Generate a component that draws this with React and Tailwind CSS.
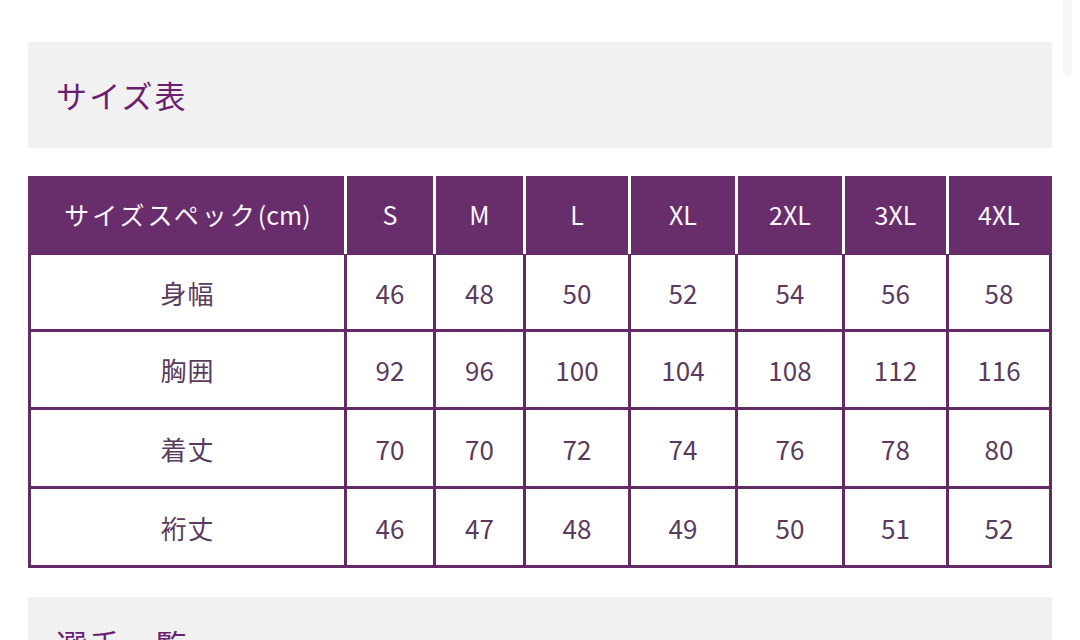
import React from "react";

const cols = ["S", "M", "L", "XL", "2XL", "3XL", "4XL"];
const rows = [
  ["身幅", [46, 48, 50, 52, 54, 56, 58]],
  ["胸囲", [92, 96, 100, 104, 108, 112, 116]],
  ["着丈", [70, 70, 72, 74, 76, 78, 80]],
  ["裄丈", [46, 47, 48, 49, 50, 51, 52]],
];
const gridCols = "grid grid-cols-[316px_89px_90px_105px_107px_107px_104px_106px]";
const font = { fontFamily: '"Noto Sans CJK JP", "Noto Sans", sans-serif' };

export default function App() {
  return (
    <div className="relative w-[1080px] h-[640px] overflow-hidden bg-white" style={font}>
      <div className="absolute right-[8px] top-0 w-[9px] h-[76px] rounded-b-full bg-[#f7f7f7]" />
      <div className="flex flex-col pt-[42px] px-[28px] w-[1080px]">
        <div className="h-[106px] bg-[#f1f1f1] flex items-center pl-[28px] pb-[2px]">
          <h2 className="text-[31px] leading-none text-[#6c1f71] tracking-[0.07em]">サイズ表</h2>
        </div>

        <div className="mt-[28px] w-[1024px]">
          <div className={`${gridCols} h-[78px] bg-[#682d6b]`}>
            <div className="flex items-center justify-center border-l-[3px] border-[#682d6b] text-[#fbf6fb] text-[25px]">
              <span className="tracking-[0.12em]">サイズスペック</span>
              <span>(cm)</span>
            </div>
            {cols.map((c, i) => (
              <div
                key={c}
                className={`flex items-center justify-center border-l-[3px] border-white text-[#fbf6fb] text-[25px] ${
                  i === cols.length - 1 ? "border-r-[3px] border-r-[#682d6b]" : ""
                }`}
              >
                {c}
              </div>
            ))}
          </div>
          {rows.map(([label, vals], ri) => (
            <div
              key={label}
              className={`${gridCols} ${ri < 2 ? "h-[78px]" : "h-[79px]"} border-b-[3px] border-[#632a66] ${
                ri === 0 ? "border-t-[1px]" : ""
              }`}
            >
              <div className="flex items-center justify-center border-l-[3px] border-[#632a66] text-[26px] text-[#5a3b5e] tracking-[0.04em]">
                {label}
              </div>
              {vals.map((v, i) => (
                <div
                  key={i}
                  className={`flex items-center justify-center border-l-[3px] border-[#632a66] text-[26px] text-[#5a3b5e] ${
                    i === vals.length - 1 ? "border-r-[3px]" : ""
                  }`}
                >
                  {v}
                </div>
              ))}
            </div>
          ))}
        </div>

        <div className="mt-[29px] h-[120px] bg-[#f1f1f1] pl-[28px] pt-[31px]">
          <h2 className="text-[31px] leading-none text-[#6c1f71] tracking-[0.07em]">選手一覧</h2>
        </div>
      </div>
    </div>
  );
}
